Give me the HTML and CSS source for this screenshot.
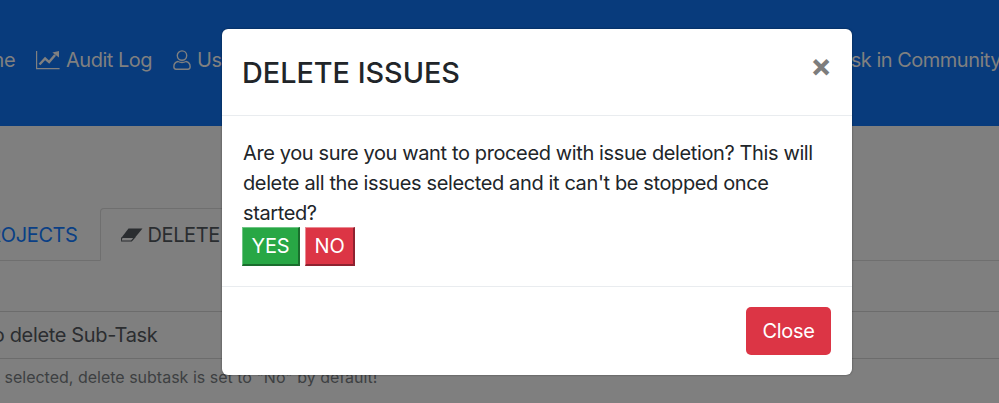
FILE: index.html
```html
<!DOCTYPE html>
<html lang="en">
<head>
<meta charset="utf-8">
<title>Delete Issues</title>
<link rel="stylesheet" href="styles.css">
</head>
<body>
<div class="page">
  <header class="topbar">
    <nav class="nav">
      <a class="nav-item nav-home">Home</a>
      <a class="nav-item">
        <svg class="nav-icon" width="24" height="20" viewBox="0 0 24 20"><path d="M.6 1v17.6h23" fill="none" stroke="currentColor" stroke-width="1.2"/><path d="M3.500 14.500l5.600-6 4 3.600 6-7.200" fill="none" stroke="currentColor" stroke-width="2.400"/><path d="M16.400 2.600L23 1v6.600z" fill="currentColor"/></svg>
        Audit Log
      </a>
      <a class="nav-item">
        <svg class="nav-icon" width="18" height="20" viewBox="0 0 18 20"><circle cx="9" cy="5.600" r="4.700" fill="none" stroke="currentColor" stroke-width="1.400"/><path d="M5 11.500C2.600 12 .9 14 .9 16.500v.6c0 1.200 1 2.100 2.100 2.100h12c1.200 0 2.100-.9 2.100-2.100v-.6c0-2.500-1.700-4.500-4.100-5-1.300.7-2.600 1-4 1s-2.700-.3-4-1z" fill="none" stroke="currentColor" stroke-width="1.400"/></svg>
        Users
      </a>
      <a class="nav-item nav-end">Ask in Community</a>
    </nav>
  </header>
  <main class="content">
    <div class="tabs">
      <a class="tab tab-link">PROJECTS</a>
      <a class="tab tab-active">
        <svg class="eraser" width="22" height="14" viewBox="0 0 22 14"><path d="M7.500.6H21.500L14.500 9H1z" fill="currentColor"/><path d="M1 9.500h12.500L10.500 13H.6L0 12.500z" fill="none" stroke="currentColor" stroke-width="1.200"/></svg>
        DELETE ISSUES
      </a>
    </div>
    <div class="option-title">Choose to delete Sub-Task</div>
    <div class="option-hint">If not selected, delete subtask is set to "No" by default!</div>
  </main>
  <div class="modal">
    <div class="modal-header">
      <h2 class="modal-title">DELETE ISSUES</h2>
      <span class="modal-x">×</span>
    </div>
    <div class="modal-body">
      <p class="modal-text">Are you sure you want to proceed with issue deletion? This will delete all the issues selected and it can't be stopped once started?</p>
      <div class="choices">
        <button class="choice choice-yes">YES</button>
        <button class="choice choice-no">NO</button>
      </div>
    </div>
    <div class="modal-footer">
      <button class="close-btn">Close</button>
    </div>
  </div>
</div>
</body>
</html>
```
FILE: styles.css
```css
html, body {
  margin: 0;
  padding: 0;
  height: 100%;
  overflow: hidden;
  font-family: Inter, "Liberation Sans", sans-serif;
}
.page {
  position: relative;
  width: 999px;
  height: 403px;
  overflow: hidden;
  background: #7f7f7f;
}
.topbar {
  height: 126px;
  background: #083b7c;
}
.nav {
  display: flex;
  align-items: center;
  gap: 21px;
  height: 120px;
  margin-left: -39px;
  color: #808080;
  font-size: 20px;
  letter-spacing: -.5px;
  white-space: nowrap;
}
.nav-item {
  display: flex;
  align-items: center;
  gap: 6px;
}
.nav-icon { flex: none; }
.nav-end {
  margin-left: auto;
  margin-right: -2px;
}
.content {
  position: relative;
  height: 277px;
}
.tabs {
  display: flex;
  align-items: flex-end;
  height: 135px;
  margin-left: -25px;
  border-bottom: 1px solid #6f6f6f;
  box-sizing: border-box;
  font-size: 20px;
  letter-spacing: -.4px;
  white-space: nowrap;
}
.tab {
  display: flex;
  align-items: center;
  gap: 5px;
  height: 53px;
  margin-bottom: -1px;
  padding: 0 22px;
  box-sizing: border-box;
  border: 1px solid transparent;
  border-radius: 4px 4px 0 0;
}
.tab-link {
  color: #0a3f85;
  padding-left: 0;
  padding-right: 21px;
}
.tab-active {
  color: #2a2d30;
  border-color: #6f6f6f #6f6f6f #7f7f7f;
  background: #7f7f7f;
  padding-left: 20px;
}
.eraser { flex: none; }
.option-title {
  margin-top: 50px;
  height: 48px;
  display: flex;
  align-items: center;
  margin-left: -89px;
  border-top: 1px solid #6c6c6c;
  border-bottom: 1px solid #6c6c6c;
  box-sizing: border-box;
  color: #2b2d30;
  font-size: 20px;
  letter-spacing: -.35px;
}
.option-hint {
  margin-top: 8px;
  margin-left: -39px;
  color: #3d3f42;
  font-size: 16px;
  line-height: 20px;
  white-space: nowrap;
}
.modal {
  position: absolute;
  left: 222px;
  top: 29px;
  width: 630px;
  height: 346px;
  display: flex;
  flex-direction: column;
  box-sizing: border-box;
  background: #fff;
  border-radius: 6px;
  box-shadow: 0 0 2px rgba(0, 0, 0, .5);
  color: #212529;
}
.modal-header {
  display: flex;
  align-items: center;
  justify-content: space-between;
  height: 87px;
  flex: none;
  padding: 0 20px 0 20px;
  box-sizing: border-box;
  border-bottom: 1px solid #e9ecef;
}
.modal-title {
  margin: 2px 0 0;
  font-size: 28.800px;
  font-weight: 500;
  line-height: 1.2;
}
.modal-x {
  margin-bottom: 12px;
  color: #7d7d7d;
  font-size: 32px;
  font-weight: 700;
  line-height: 1;
}
.modal-body {
  height: 171px;
  flex: none;
  padding: 22px 21px 0;
  box-sizing: border-box;
  border-bottom: 1px solid #e9ecef;
}
.modal-text {
  margin: 0;
  font-size: 20px;
  line-height: 30px;
  letter-spacing: -.38px;
}
.choices {
  display: flex;
  gap: 5px;
  margin: -1px 0 0 -1px;
}
.choice {
  height: 39px;
  padding: 0;
  border: 1px solid;
  border-radius: 0;
  color: #fff;
  font: 20px Inter, "Liberation Sans", sans-serif;
  letter-spacing: -.2px;
}
.choice-yes {
  width: 58px;
  background: #28a745;
  border-color: #6fc585 #1a6d2d #1a6d2d #6fc585;
  border-width: 1px 2px 2px 1px;
}
.choice-no {
  width: 50px;
  background: #dc3545;
  border-color: #ea8a93 #8f2230 #8f2230 #ea8a93;
  border-width: 1px 2px 2px 1px;
}
.modal-footer {
  display: flex;
  justify-content: flex-end;
  align-items: flex-start;
  flex: 1;
  padding: 20px 21px 0;
}
.close-btn {
  width: 85px;
  height: 48px;
  border: 0;
  border-radius: 5px;
  background: #dc3545;
  color: #fff;
  font: 20px Inter, "Liberation Sans", sans-serif;
  letter-spacing: -.3px;
}
```
